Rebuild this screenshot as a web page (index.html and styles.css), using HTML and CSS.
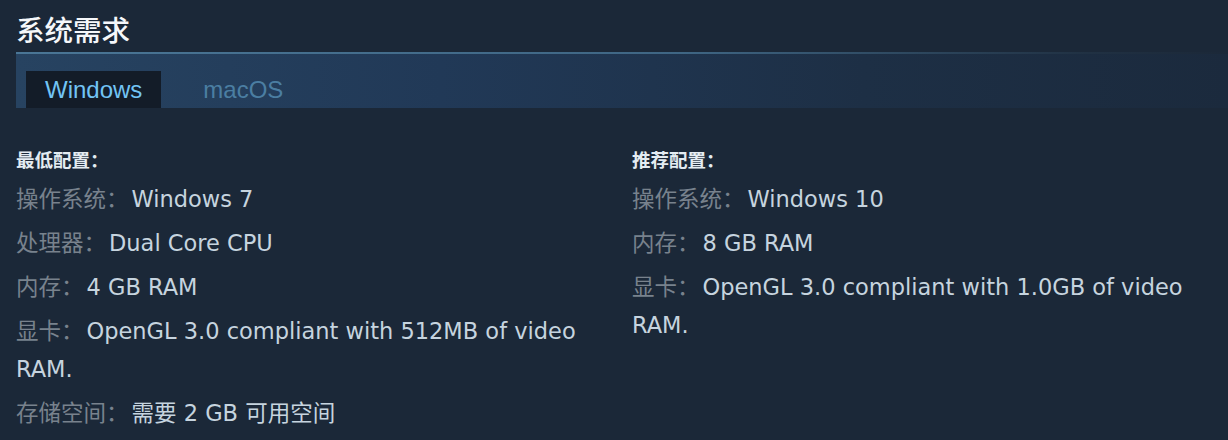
FILE: index.html
```html
<!DOCTYPE html>
<html lang="zh-CN">
<head>
<meta charset="utf-8">
<title>系统需求</title>
<link rel="stylesheet" href="styles.css">
</head>
<body>
<div class="sysreq">
  <h2 class="title">系统需求</h2>
  <div class="tabs">
    <div class="tab active">Windows</div>
    <div class="tab">macOS</div>
  </div>
  <div class="cols">
    <div class="col">
      <div class="col-head">最低配置：</div>
      <ul class="reqs">
        <li><span class="lbl">操作系统：</span><span class="val">Windows 7</span></li>
        <li><span class="lbl">处理器：</span><span class="val">Dual Core CPU</span></li>
        <li><span class="lbl">内存：</span><span class="val">4 GB RAM</span></li>
        <li><span class="lbl">显卡：</span><span class="val">OpenGL 3.0 compliant with 512MB of video RAM.</span></li>
        <li><span class="lbl">存储空间：</span><span class="val">需要 2 GB 可用空间</span></li>
      </ul>
    </div>
    <div class="col">
      <div class="col-head">推荐配置：</div>
      <ul class="reqs">
        <li><span class="lbl">操作系统：</span><span class="val">Windows 10</span></li>
        <li><span class="lbl">内存：</span><span class="val">8 GB RAM</span></li>
        <li><span class="lbl">显卡：</span><span class="val">OpenGL 3.0 compliant with 1.0GB of video RAM.</span></li>
      </ul>
    </div>
  </div>
</div>
</body>
</html>
```

FILE: styles.css
```css
html, body {
  margin: 0;
  padding: 0;
  background: #1b2838;
  height: 100%;
  overflow: hidden;
}
body {
  font-family: "DejaVu Sans", "Noto Sans CJK SC", sans-serif;
  color: #c6d4df;
}
.sysreq {
  padding-left: 16px;
}
.title {
  margin: 10px 0 0 0;
  height: 42px;
  font-family: "Noto Sans CJK SC", sans-serif;
  font-size: 28.5px;
  line-height: 38px;
  font-weight: 500;
  color: #f5f7fa;
  border-bottom: 2px solid transparent;
  border-image: linear-gradient(to right, #4a7696 0%, #3f6684 55%, rgba(63,102,132,0.15) 88%, rgba(27,40,56,0) 100%) 1;
}
.tabs {
  display: flex;
  gap: 23px;
  height: 54px;
  box-sizing: border-box;
  padding: 17px 0 0 10px;
  background: linear-gradient(to right, #274361 0%, #213957 35%, #1d2f45 70%, #1b2a3d 100%);
}
.tab {
  font-family: "Liberation Sans", Arial, sans-serif;
  font-size: 24px;
  height: 37px;
  line-height: 37px;
  padding: 0 19px;
  color: #4b7ea2;
}
.tab.active {
  background: #131c28;
  color: #72c4f4;
}
.cols {
  display: grid;
  grid-template-columns: 600px 600px;
  column-gap: 16px;
  margin-top: 39px;
}
.col-head {
  font-family: "Noto Sans CJK SC", sans-serif;
  font-size: 18.5px;
  font-weight: 700;
  line-height: 24px;
  color: #e4ecf2;
  margin-bottom: 9px;
}
.reqs {
  list-style: none;
  margin: 0;
  padding: 0;
}
.reqs li {
  font-size: 22.5px;
  line-height: 38px;
  margin-bottom: 6px;
}
.lbl {
  color: #78828d;
  margin-right: 3px;
}
.val {
  color: #c6d4df;
}
```
